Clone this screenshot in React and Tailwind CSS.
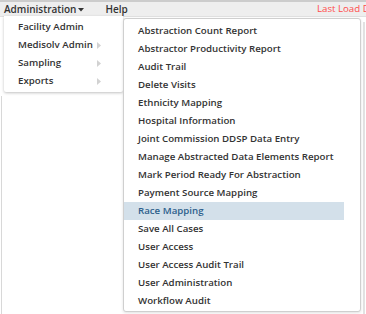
import React from "react";

const sub = [
  "Abstraction Count Report",
  "Abstractor Productivity Report",
  "Audit Trail",
  "Delete Visits",
  "Ethnicity Mapping",
  "Hospital Information",
  "Joint Commission DDSP Data Entry",
  "Manage Abstracted Data Elements Report",
  "Mark Period Ready For Abstraction",
  "Payment Source Mapping",
  "Race Mapping",
  "Save All Cases",
  "User Access",
  "User Access Audit Trail",
  "User Administration",
  "Workflow Audit",
];

const left = [
  { t: "Facility Admin", a: false },
  { t: "Medisolv Admin", a: true },
  { t: "Sampling", a: true },
  { t: "Exports", a: true },
];

function Arrow({ show }) {
  return (
    <svg width="4" height="7" viewBox="0 0 4 7" className={show ? "" : "invisible"}>
      <path d="M0 0 L4 3.5 L0 7 Z" fill="#d2d2d2" />
    </svg>
  );
}

export default function App() {
  return (
    <div
      className="relative w-[366px] h-[314px] bg-white overflow-hidden text-[#333]"
      style={{ fontFamily: '"Open Sans", "Noto Sans", sans-serif' }}
    >
      {/* top bar */}
      <div className="h-[16px] bg-[#eeeeee] border-t-[2px] border-[#cccccc] flex items-center text-[10px] font-semibold leading-none">
        <div className="pl-[4px] flex items-center">
          Administration
          <svg width="6" height="4" viewBox="0 0 6 4" className="ml-[2px] mt-[1px]">
            <path d="M0 0 L6 0 L3 3.5 Z" fill="#333" />
          </svg>
        </div>
        <div className="ml-[21px]">Help</div>
        <div className="ml-auto text-[#ff4d4d] font-normal text-[9.7px] whitespace-nowrap mr-[-18px]">Last Load Date</div>
      </div>
      <div className="h-px bg-[#e0e0e0]" />

      {/* page borders */}
      <div className="absolute left-[1px] top-[96px] bottom-0 w-px bg-[#d8d8d8]" />
      <div className="absolute left-[363px] top-[22px] bottom-0 w-[2px] bg-[#e2e2e2]" />

      {/* left menu */}
      <div className="absolute left-[4px] top-[16px] w-[119px] bg-white rounded-b-[2px] shadow-[0_1px_3px_rgba(0,0,0,0.25)] py-[2px] text-[9.7px] font-semibold flex flex-col">
        {left.map((i) => (
          <div key={i.t} className="h-[18px] pl-[14px] pr-[22px] flex items-center justify-between whitespace-nowrap">
            <span>{i.t}</span>
            <Arrow show={i.a} />
          </div>
        ))}
      </div>

      {/* submenu */}
      <div className="absolute left-[123px] top-[18px] w-[238px] h-[294px] bg-white border border-[#cfcfcf] rounded-[3px] shadow-[0_1px_3px_rgba(0,0,0,0.12)] pt-[3px] text-[9.7px] font-semibold flex flex-col">
        {sub.map((s) => (
          <div
            key={s}
            className={
              "w-[220px] h-[18px] leading-[18px] pl-[14px] whitespace-nowrap " +
              (s === "Race Mapping" ? "bg-[#d3e0ea] text-[#2d5f8c]" : "")
            }
          >
            {s}
          </div>
        ))}
      </div>
    </div>
  );
}
